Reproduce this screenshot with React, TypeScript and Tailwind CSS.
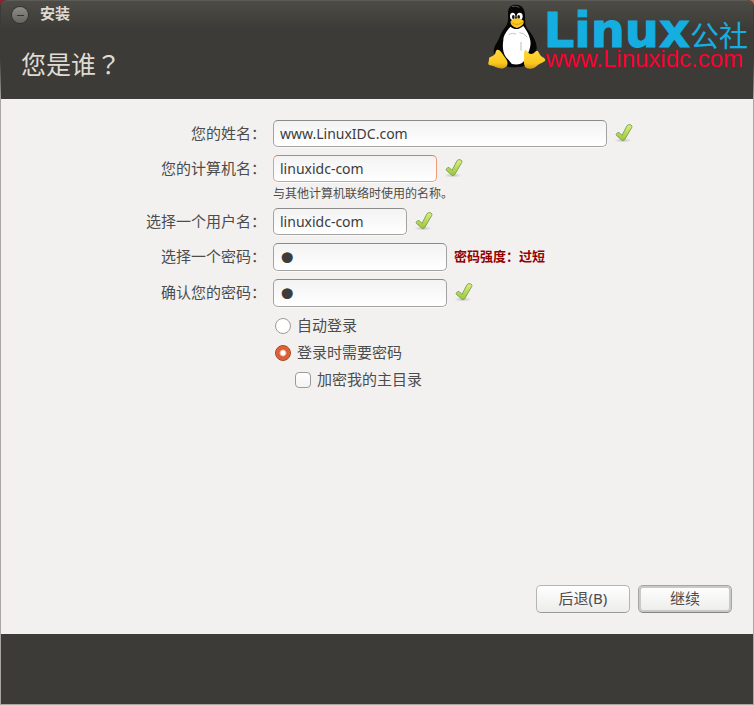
import type { ReactNode } from "react";

const FONT = "font-['Noto_Sans','Noto_Sans_CJK_SC',sans-serif]";
const CJK = "font-['Noto_Sans_CJK_SC',sans-serif]";

function Tick() {
  return (
    <svg width="18" height="20" viewBox="0 0 54 60" className="mb-0.5 ml-2 shrink-0" role="img" aria-label="OK">
      <defs>
        <linearGradient id="tickFill" x1="0" y1="0" x2="0" y2="1">
          <stop offset="0" stopColor="#dcee7e" />
          <stop offset="1" stopColor="#9cc43c" />
        </linearGradient>
        <radialGradient id="tickShade">
          <stop offset="0" stopColor="#000" stopOpacity="0.2" />
          <stop offset="1" stopColor="#000" stopOpacity="0" />
        </radialGradient>
      </defs>
      <ellipse cx="24" cy="52" rx="27" ry="7" fill="url(#tickShade)" />
      <path
        d="M4 33 Q8 26 13 29 L21 37 L36 8 Q41 2 48 6 Q53 9 50 14 L29 50 Q25 55 20 51 L5 38 Q2 36 4 33 Z"
        fill="url(#tickFill)"
        stroke="#6f9e4c"
        strokeWidth="2.5"
      />
    </svg>
  );
}

function Tux() {
  return (
    <svg width="64" height="74" viewBox="0 0 192 222" className="shrink-0" aria-hidden="true">
      <defs>
        <linearGradient id="foot" x1="0" y1="0" x2="0" y2="1">
          <stop offset="0" stopColor="#ffd83a" />
          <stop offset="0.7" stopColor="#fbc81f" />
          <stop offset="1" stopColor="#d79a16" />
        </linearGradient>
      </defs>
      <path
        d="M93 14 C78 15 71 26 72 42 C73 60 73 70 62 84 C48 101 46 118 36 132 C29 144 27 156 32 162 L56 196 C76 204 110 204 128 196 L150 158 C160 156 160 140 154 124 C147 106 139 97 130 86 C122 76 124 64 123 46 C122 24 113 13 93 14 Z"
        fill="#060606"
      />
      <path
        d="M79 80 C70 92 58 106 58 120 C55 140 56 158 66 172 C74 180 80 188 84 192 C100 196 116 192 122 180 C132 160 142 144 139 122 C137 106 127 90 118 78 C104 90 92 90 79 80 Z"
        fill="#fff"
      />
      <path d="M74 104 Q84 97 96 102 M106 98 Q120 98 130 112" fill="none" stroke="#c4c4c4" strokeWidth="3" />
      <path d="M111 126 L111 152" stroke="#bcbcbc" strokeWidth="3" />
      <path d="M84 20 Q95 16 106 22" fill="none" stroke="#555" strokeWidth="3" />
      <ellipse cx="86" cy="49" rx="8" ry="11" fill="#fff" />
      <ellipse cx="107" cy="49" rx="9" ry="11" fill="#fff" />
      <ellipse cx="88" cy="51" rx="4" ry="6" fill="#111" />
      <ellipse cx="104" cy="51" rx="4" ry="6" fill="#111" />
      <path
        d="M80 64 C87 56 100 52 108 56 C116 60 121 61 119 67 C119 75 106 83 98 84 C90 82 77 74 80 64 Z"
        fill="#fcc91f"
      />
      <path d="M82 67 Q98 80 117 66" fill="none" stroke="#c98a10" strokeWidth="2" />
      <path
        d="M40 149 C49 148 57 164 64 174 C74 186 73 200 60 204 C46 210 36 199 18 196 C9 194 15 186 15 178 C13 169 30 171 34 160 C35 154 36 150 40 149 Z"
        fill="url(#foot)"
      />
      <path
        d="M124 150 C130 149 131 162 142 162 C152 162 155 150 161 153 C167 158 166 166 175 171 C188 178 186 183 174 188 C160 193 154 207 138 206 C123 206 119 196 120 182 C122 168 117 154 124 150 Z"
        fill="url(#foot)"
      />
    </svg>
  );
}

function Logo() {
  return (
    <div className="flex shrink-0 pr-[5px]" aria-label="Linux公社">
      <Tux />
      <div className="-ml-1 pt-3">
        <div className="flex h-9 items-end text-[#15aee0]">
          <span className="font-['DejaVu_Sans',sans-serif] text-[48px] leading-9 font-bold [-webkit-text-stroke:1px_#15aee0]">Linux</span>
          <span className={`${CJK} text-[29px] leading-7`}>公社</span>
        </div>
        <div className="pl-0.5 font-['Liberation_Sans',sans-serif] text-[24px] leading-[22px] text-[#fb0030]">www.Linuxidc.com</div>
      </div>
    </div>
  );
}

function Row({ id, label, children }: { id: string; label: string; children: ReactNode }) {
  return (
    <div className="grid grid-cols-[265px_1fr] items-center gap-x-[7px]">
      <label htmlFor={id} className={`${CJK} pb-0.5 text-right leading-6`}>
        {label}
      </label>
      <div className="flex items-center">{children}</div>
    </div>
  );
}

const FIELD =
  "min-w-0 rounded-[5px] border bg-linear-to-b from-[#f3f3f3] to-white text-[#3c3c3c] shadow-[0_1px_0_#fafafa] outline-none";
const TEXT = "h-[27px] px-1.5 text-[14px]";
const SECRET = "h-7 w-[174px] px-0.5 pt-1 font-['DejaVu_Sans',sans-serif] text-[38px] leading-none";
const PLAIN = "border-[#a3a3a1] border-t-[#8b8b89]";
const BUTTON = "h-7 w-[94px] rounded-[5px] border bg-linear-to-b from-white to-[#ececeb] pb-0.5 leading-6";
const RADIO = "m-0 size-4 shrink-0 appearance-none rounded-full border";
const OPTION = "flex h-[27px] items-center gap-1.5";

export default function App() {
  return (
    <div lang="zh-CN" className={`${FONT} flex min-h-screen bg-linear-to-r from-[#8f2433] to-[#c8694a] text-[15px] text-[#4c4c4c]`}>
      <div className="flex flex-1 flex-col rounded-t-[6px] bg-linear-to-b from-[#3c3b37] from-[60px] to-[#aaa7a2] to-[100px] px-px pb-px">
        <header className="flex h-[99px] items-start justify-between rounded-t-[6px] bg-[#3c3b37] bg-linear-to-b from-[#4d4c46] to-[#3c3b37] to-30% text-[#dfdbd2] shadow-[inset_0_1px_0_#5d5c56]">
          <div>
            <div className="flex h-[30px] items-center gap-3 pl-[11px]">
              <button
                type="button"
                aria-label="最小化"
                className="flex size-4 items-center justify-center rounded-full bg-linear-to-b from-[#8d8c87] to-[#66655f] shadow-[0_0_0_1px_#33322e]"
              >
                <span className="h-px w-[7px] bg-[#34332f]" />
              </button>
              <span className={`${CJK} pb-1 leading-6 font-bold`}>安装</span>
            </div>
            <h1 className={`${CJK} pt-[15px] pl-5 text-[25px] leading-9`}>
              您是谁<span className="font-['Noto_Sans_CJK_TC',sans-serif]" lang="zh-TW">？</span>
            </h1>
          </div>
          <Logo />
        </header>

        <main className="flex flex-1 flex-col bg-[#f2f1f0]">
          <form className="flex flex-1 flex-col pt-[21px]">
            <div className="flex flex-col gap-2">
              <Row id="name" label="您的姓名：">
                <input id="name" type="text" defaultValue="www.LinuxIDC.com" className={`${FIELD} ${TEXT} ${PLAIN} w-[334px]`} />
                <Tick />
              </Row>
              <div>
                <Row id="host" label="您的计算机名：">
                  <input
                    id="host"
                    type="text"
                    defaultValue="linuxidc-com"
                    aria-describedby="host-hint"
                    className={`${FIELD} ${TEXT} w-[164px] border-[#ee9a7e] border-t-[#dd7c5c]`}
                  />
                  <Tick />
                </Row>
                <p id="host-hint" className="pb-0.5 pl-[272px] text-[12px] leading-6">
                  与其他计算机联络时使用的名称。
                </p>
                <Row id="user" label="选择一个用户名：">
                  <input id="user" type="text" defaultValue="linuxidc-com" className={`${FIELD} ${TEXT} ${PLAIN} w-[134px]`} />
                  <Tick />
                </Row>
              </div>
              <Row id="password" label="选择一个密码：">
                <input id="password" type="password" defaultValue="x" className={`${FIELD} ${SECRET} ${PLAIN}`} />
                <strong className="ml-[7px] pb-0.5 text-[13px] leading-6 text-[#950000]">密码强度：过短</strong>
              </Row>
              <Row id="confirm" label="确认您的密码：">
                <input id="confirm" type="password" defaultValue="x" className={`${FIELD} ${SECRET} ${PLAIN}`} />
                <Tick />
              </Row>
            </div>

            <div className="flex flex-col pt-[5px] pl-[274px]">
              <label className={OPTION}>
                <input type="radio" name="login" className={`${RADIO} border-[#9b9b99] bg-white`} />
                自动登录
              </label>
              <label className={OPTION}>
                <input
                  type="radio"
                  name="login"
                  defaultChecked
                  className={`${RADIO} border-[#a9401c] bg-[radial-gradient(circle,#fff_2px,#d9582e_4px,#dd6b42_7px)]`}
                />
                登录时需要密码
              </label>
              <label className={`${OPTION} pl-5`}>
                <input
                  type="checkbox"
                  className="m-0 size-4 shrink-0 appearance-none rounded-[4px] border border-[#9b9b99] bg-linear-to-b from-white to-[#f3f3f3]"
                />
                加密我的主目录
              </label>
            </div>

            <div className="mt-auto flex justify-end gap-2 pr-[21px] pb-[21px]">
              <button type="button" className={`${BUTTON} border-[#b4b4b2] border-b-[#9a9a98]`}>
                后退(B)
              </button>
              <button type="submit" className={`${BUTTON} border-[#a5a5a3] border-b-[#858583] shadow-[inset_0_0_0_2px_#c9c9c8]`}>
                继续
              </button>
            </div>
          </form>
        </main>

        <footer className="h-[70px] bg-[#3c3b37]" />
      </div>
    </div>
  );
}
